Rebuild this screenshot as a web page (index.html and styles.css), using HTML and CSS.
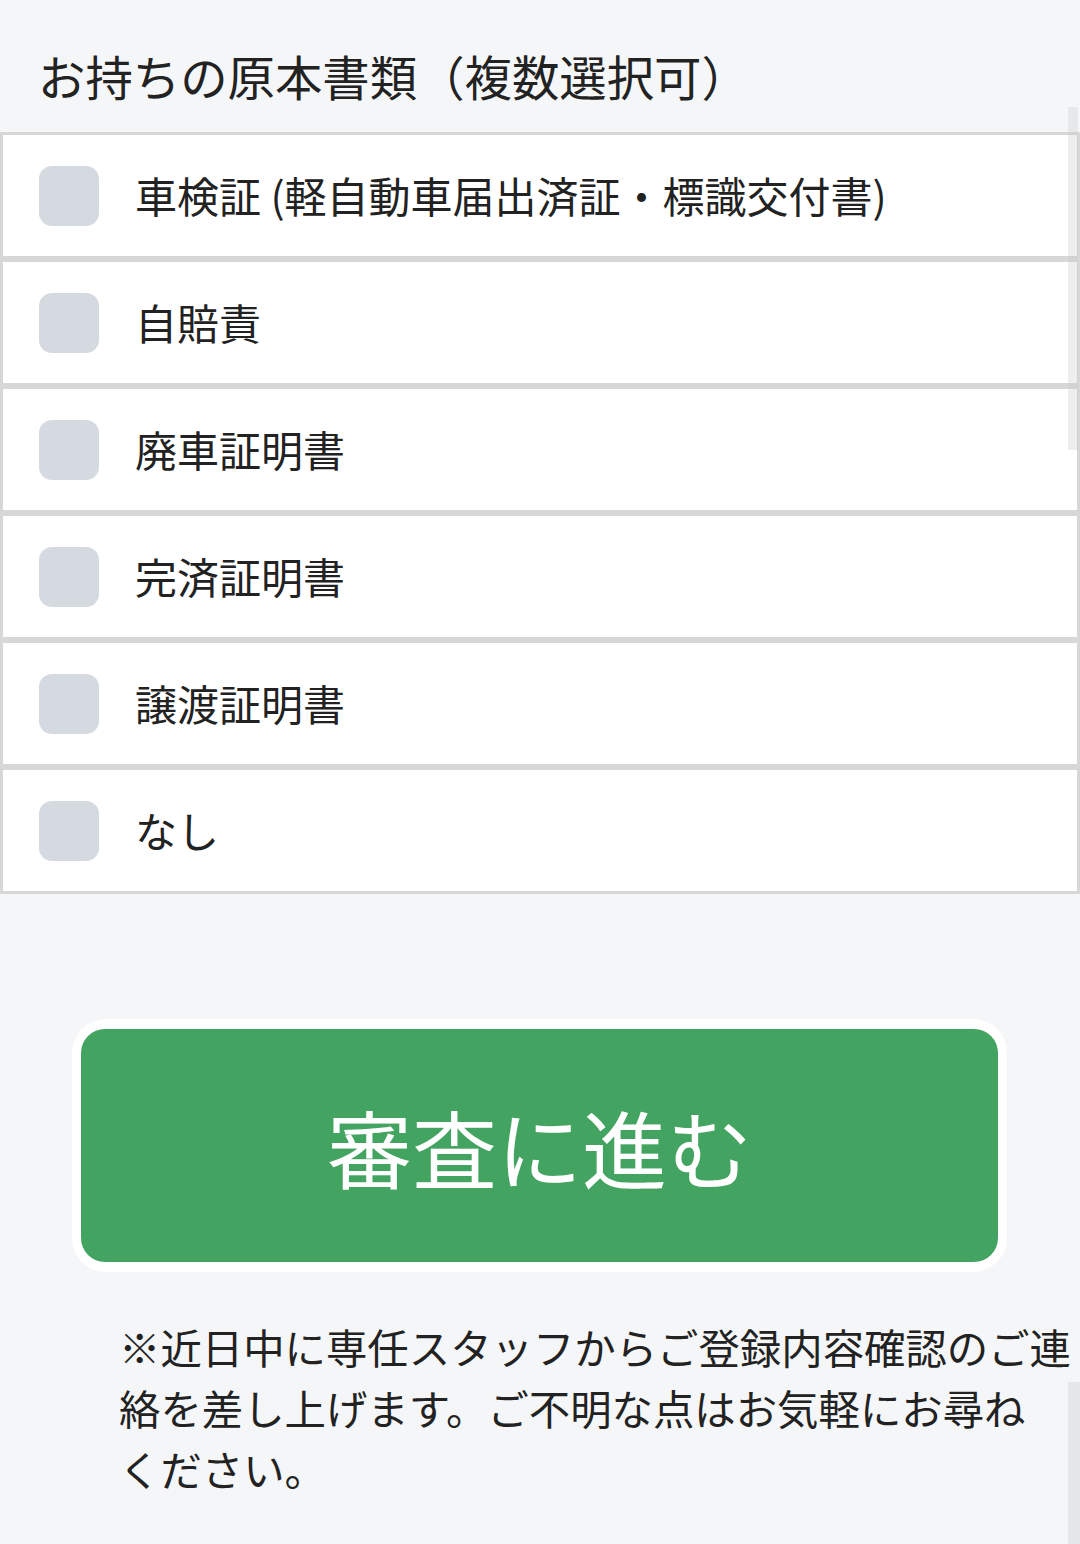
FILE: index.html
```html
<!DOCTYPE html>
<html lang="ja">
<head>
<meta charset="utf-8">
<link rel="stylesheet" href="styles.css">
</head>
<body>
<div class="page">
  <h2 class="title">お持ちの原本書類（複数選択可）</h2>
  <div class="options">
    <label class="option"><span class="box"></span><span class="label">車検証 (軽自動車届出済証・標識交付書)</span></label>
    <label class="option"><span class="box"></span><span class="label">自賠責</span></label>
    <label class="option"><span class="box"></span><span class="label">廃車証明書</span></label>
    <label class="option"><span class="box"></span><span class="label">完済証明書</span></label>
    <label class="option"><span class="box"></span><span class="label">譲渡証明書</span></label>
    <label class="option"><span class="box"></span><span class="label">なし</span></label>
  </div>
  <div class="btn-wrap">
    <button class="submit">審査に進む</button>
  </div>
  <p class="note">※近日中に専任スタッフからご登録内容確認のご連絡を差し上げます。ご不明な点はお気軽にお尋ね<span class="nowrap">ください。</span></p>
  <div class="scroll scroll-top"></div>
  <div class="scroll scroll-bottom"></div>
</div>
</body>
</html>
```
FILE: styles.css
```css
html, body {
  margin: 0;
  padding: 0;
  background: #f5f6f8;
}
body {
  font-family: "Noto Sans CJK JP", "Noto Sans", sans-serif;
  color: #222;
}
.page {
  position: relative;
  width: 1080px;
  height: 1544px;
  overflow: hidden;
}
.title {
  margin: 0;
  padding: 41px 0 21px 38px;
  font-size: 47.4px;
  line-height: 70px;
  font-weight: 400;
  color: #222;
}
.options {
  display: flex;
  flex-direction: column;
}
.option {
  box-sizing: border-box;
  height: 127px;
  border: 3px solid #d7d7d7;
  background: #fff;
  display: flex;
  align-items: center;
  padding-left: 36px;
  gap: 36px;
}
.box {
  width: 60px;
  height: 60px;
  border-radius: 13px;
  background: #d5dae1;
  flex: none;
}
.label {
  font-size: 42px;
  line-height: 1.2;
  color: #222;
}
.btn-wrap {
  margin: 125px 0 0 72px;
  width: 935px;
  box-sizing: border-box;
  padding: 10px 9px;
  background: #fff;
  border-radius: 34px;
}
.submit {
  display: block;
  width: 100%;
  height: 233px;
  border: none;
  border-radius: 24px;
  background: #43a461;
  color: #fff;
  font-family: "Noto Sans CJK JP", "Noto Sans", sans-serif;
  font-size: 85px;
  font-weight: 400;
  padding: 0;
  line-height: 1;
}
.note {
  margin: 44px 0 0 119px;
  width: 958px;
  font-size: 41.4px;
  line-height: 61px;
  color: #222;
}
.nowrap {
  white-space: nowrap;
}
.scroll {
  position: absolute;
  right: 2px;
  width: 10px;
  background: rgba(200, 200, 200, 0.3);
}
.scroll-top {
  top: 107px;
  height: 343px;
}
.scroll-bottom {
  top: 1382px;
  height: 162px;
  right: 0;
  width: 12px;
  background: rgba(200, 200, 200, 0.35);
}
```
